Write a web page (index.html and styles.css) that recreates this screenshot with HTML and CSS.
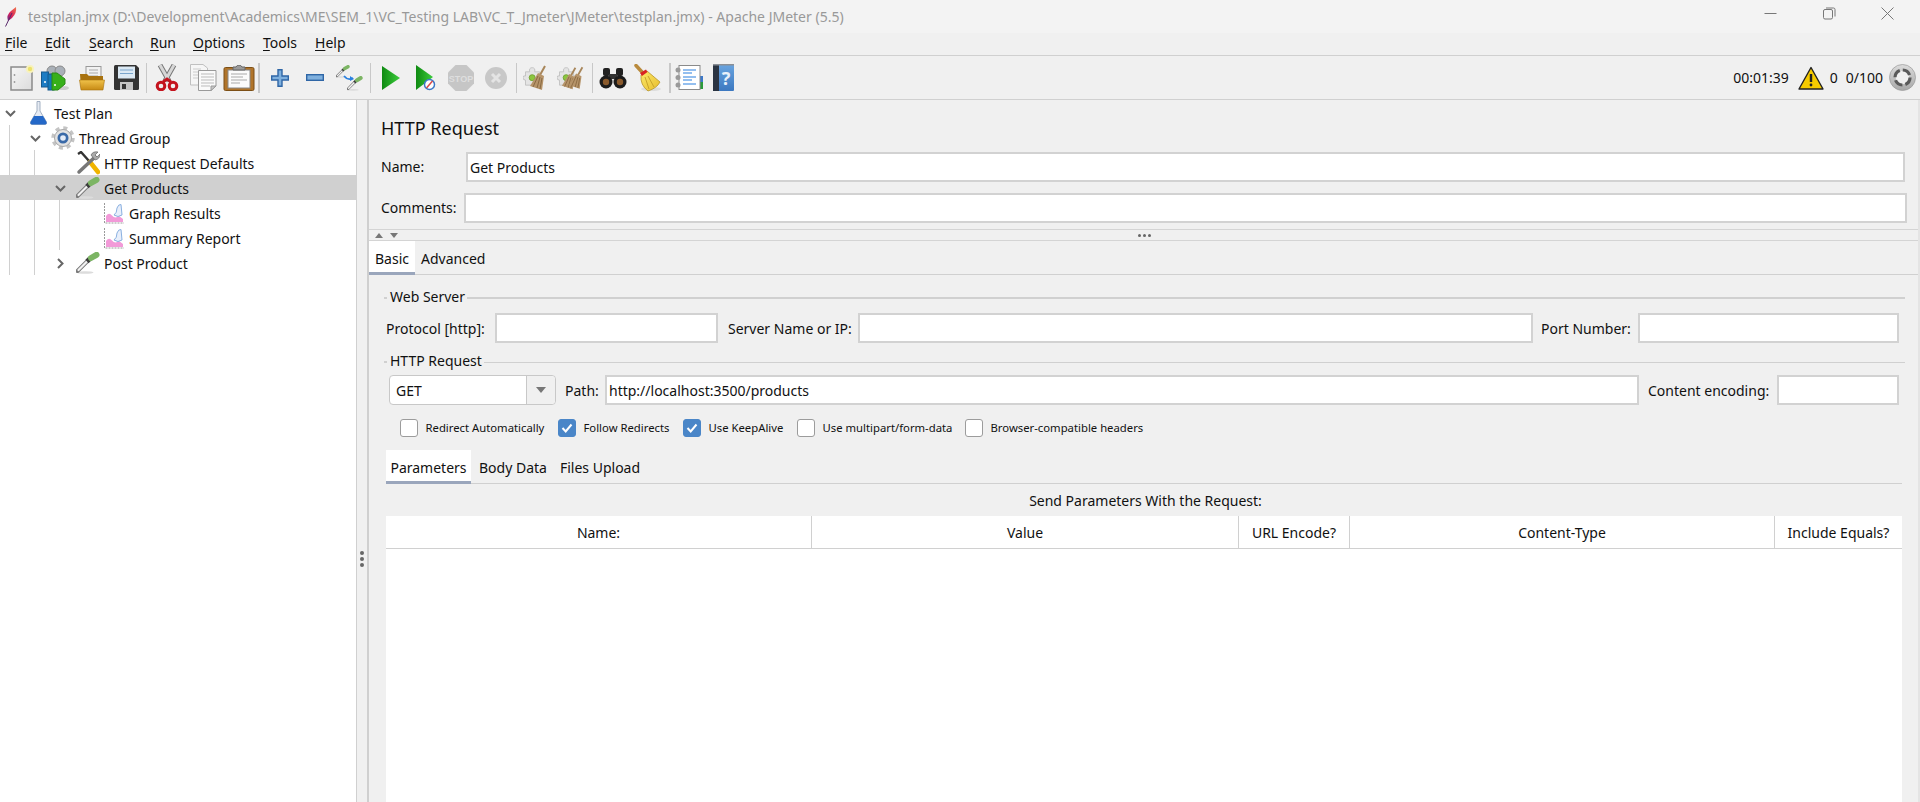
FILE: index.html
```html
<!DOCTYPE html>
<html lang="en">
<head>
<meta charset="utf-8">
<title>testplan.jmx - Apache JMeter (5.5)</title>
<link rel="stylesheet" href="styles.css">
</head>
<body>
<svg class="defs" aria-hidden="true">
  <defs>
    <linearGradient id="gPage" x1="0" y1="0" x2="1" y2="1"><stop offset="0" stop-color="#f6f6f6"/><stop offset="1" stop-color="#dcdcdc"/></linearGradient>
    <linearGradient id="gPlay" x1="0" y1="0" x2="1" y2="0"><stop offset="0" stop-color="#0f8a12"/><stop offset="1" stop-color="#3ccc3c"/></linearGradient>
    <linearGradient id="gFolder" x1="0" y1="0" x2="0" y2="1"><stop offset="0" stop-color="#f0c24a"/><stop offset="1" stop-color="#c78a14"/></linearGradient>
    <linearGradient id="gBook" x1="0" y1="0" x2="0" y2="1"><stop offset="0" stop-color="#6aa5e0"/><stop offset="1" stop-color="#3c78c0"/></linearGradient>
    <linearGradient id="gSpin" x1="0" y1="0" x2="0" y2="1"><stop offset="0" stop-color="#dcdcdc"/><stop offset="1" stop-color="#a8a8a8"/></linearGradient>
    <linearGradient id="gFeather" x1="1" y1="0" x2="0" y2="1"><stop offset="0" stop-color="#f0764a"/><stop offset=".6" stop-color="#d81e5a"/><stop offset="1" stop-color="#6a2a8a"/></linearGradient>
    <linearGradient id="gBroom" x1="0" y1="0" x2="1" y2="1"><stop offset="0" stop-color="#fbe96a"/><stop offset="1" stop-color="#e8bc2c"/></linearGradient>
    <symbol id="dropper" viewBox="0 0 24 22">
      <ellipse cx="9" cy="20.500" rx="8.500" ry="1.300" fill="#dcdcdc"/>
      <path d="M1.500 19 L11 9.500" stroke="#7a7a7a" stroke-width="4" stroke-linecap="round"/>
      <path d="M2.500 18 L11 9.500" stroke="#f2f2f2" stroke-width="2.200" stroke-linecap="round"/>
      <path d="M11 9.500 L14 6.500" stroke="#3c3c3c" stroke-width="4.600"/>
      <path d="M15 6 L20.500 2.800" stroke="#7cb564" stroke-width="6" stroke-linecap="round"/>
    </symbol>
    <symbol id="graph" viewBox="0 0 21 21">
      <path d="M1.500 0 V20 H21" fill="none" stroke="#9a9a9a" stroke-dasharray="2 1"/>
      <path d="M3 19 V13 Q6 9 9 12.500 Q12 16 16 13 L20 16 V19z" fill="#f29ad8"/>
      <path d="M11 12 Q14 10 14 5 Q15.500 1 18 1.500 L19 12 Q15 15 11 12z" fill="#e8effb" stroke="#8ab0e0"/>
    </symbol>
    <symbol id="broomBrown" viewBox="0 0 20 26">
      <path d="M16 1 L11 10" stroke="#a8865a" stroke-width="2"/>
      <path d="M9 8 L15 11 L13 25 L1 21z" fill="#b6946a"/>
      <path d="M9 11 L4 22 M11 12 L8 23 M13 13 L11 24" stroke="#8a6a42"/>
    </symbol>
    <symbol id="puzzle" viewBox="0 0 24 24">
      <path d="M3 7 H8 Q7 2 11 2 Q15 2 14 7 H20 V12 Q24 11 24 15 Q24 19 20 18 V23 H3 V17 Q0 17 0 14 Q0 11 3 12z" fill="#e4e4e4" stroke="#bdbdbd"/>
      <circle cx="11" cy="14" r="3.600" fill="#8cc63f" stroke="#6c9f2a"/>
    </symbol>
  </defs>
</svg>

<header class="titlebar">
  <svg class="feather" width="12" height="20" viewBox="0 0 12 20"><path d="M11 0 Q12 6 7 11 L3 14 Q1 8 6 4z" fill="url(#gFeather)"/><path d="M7 6 L0.500 19.500" stroke="#5a2a6a" stroke-width="1"/></svg>
  <span class="title">testplan.jmx (D:\Development\Academics\ME\SEM_1\VC_Testing LAB\VC_T_Jmeter\JMeter\testplan.jmx) - Apache JMeter (5.5)</span>
  <div class="winbtns">
    <span class="winbtn"><svg width="13" height="13" viewBox="0 0 13 13"><path d="M0.500 6.500H12.500" stroke="#777"/></svg></span>
    <span class="winbtn"><svg width="13" height="13" viewBox="0 0 13 13"><rect x="0.500" y="2.500" width="9" height="9.500" rx="1.500" fill="none" stroke="#777"/><path d="M3 1 H10.500 Q12 1 12 2.500 V9.500" fill="none" stroke="#777"/></svg></span>
    <span class="winbtn"><svg width="13" height="13" viewBox="0 0 13 13"><path d="M0.500 0.500L12.500 12.500M12.500 0.500L0.500 12.500" stroke="#777"/></svg></span>
  </div>
</header>

<nav class="menubar">
  <span class="menu m-file"><u>F</u>ile</span>
  <span class="menu m-edit"><u>E</u>dit</span>
  <span class="menu m-search"><u>S</u>earch</span>
  <span class="menu m-run"><u>R</u>un</span>
  <span class="menu m-options"><u>O</u>ptions</span>
  <span class="menu m-tools"><u>T</u>ools</span>
  <span class="menu"><u>H</u>elp</span>
</nav>

<div class="toolbar">
  <div class="group first">
    <span class="tb"><svg width="24" height="26" viewBox="0 0 24 26"><rect x="1" y="2" width="21" height="23" fill="url(#gPage)" stroke="#8a8a8a" stroke-width="1.500"/><circle cx="4.500" cy="10" r=".9" fill="#999"/><circle cx="4.500" cy="17" r=".9" fill="#999"/><circle cx="20" cy="4" r="4" fill="#f8f2bc"/><circle cx="20" cy="4" r="2.200" fill="#ece26c"/></svg></span>
    <span class="tb shift-l"><svg width="28" height="26" viewBox="0 0 28 26"><ellipse cx="22" cy="23" rx="6" ry="2" fill="#ccc"/><circle cx="11" cy="6" r="5" fill="#a9b0b8" stroke="#8a8a8a"/><circle cx="19" cy="6" r="5" fill="#a9b0b8" stroke="#8a8a8a"/><rect x="0.500" y="7" width="7" height="15" fill="#1c7cc4" stroke="#15598e"/><rect x="7" y="9" width="6" height="16" fill="#157ab8" stroke="#15598e"/><path d="M11 8 H16 L24 14 V19 L17 25 H11z" fill="#37b01a" stroke="#2a8a14"/><circle cx="4" cy="17" r="1" fill="#fff"/><circle cx="14" cy="20" r="1" fill="#fff"/></svg></span>
    <span class="tb"><svg width="26" height="26" viewBox="0 0 26 26"><rect x="7" y="1.500" width="15" height="14" fill="#f2f2f2" stroke="#999"/><path d="M10 5H19M10 8H19M10 11H19" stroke="#aaa"/><path d="M1 9 H8 L10 11 H24 V24 H2z" fill="#a8720f"/><path d="M0.500 15 H25.500 L24 25 H2z" fill="url(#gFolder)" stroke="#a8720f" stroke-width=".6"/></svg></span>
    <span class="tb"><svg width="25" height="25" viewBox="0 0 25 25"><path d="M0 1.500 Q0 0 1.500 0 H22 L25 3 V23.500 Q25 25 23.500 25 H1.500 Q0 25 0 23.500z" fill="#333"/><rect x="4" y="1.500" width="17" height="12" fill="#dbe9f4"/><path d="M6 5H19M6 8.500H19" stroke="#7aa5cc"/><rect x="6" y="17" width="13" height="8" fill="#c4c4c4"/><rect x="8" y="19" width="4" height="5" fill="#333"/></svg></span>
  </div>
  <i class="sep sep-a"></i>
  <div class="group wide">
    <span class="tb"><svg width="24" height="27" viewBox="0 0 24 27"><path d="M5 1 L14 17 M19 1 L10 17" stroke="#777" stroke-width="5"/><path d="M5 1 L14 17 M19 1 L10 17" stroke="#d6d6d6" stroke-width="3"/><circle cx="6" cy="22" r="3.800" fill="none" stroke="#c4141e" stroke-width="3"/><circle cx="18" cy="22" r="3.800" fill="none" stroke="#c4141e" stroke-width="3"/><path d="M8 18 L12 15 L16 18" fill="none" stroke="#c4141e" stroke-width="3"/></svg></span>
    <span class="tb"><svg width="27" height="27" viewBox="0 0 27 27"><path d="M0.500 0.500 H13 L17.500 4 V21 H0.500z" fill="#f6f6f6" stroke="#c0c0c0"/><path d="M3 5H11M3 8H11M3 11H8M3 14H8" stroke="#ccc"/><path d="M8.500 6.500 H26 V22 L21 26.500 H8.500z" fill="#fafafa" stroke="#9a9a9a"/><path d="M11 10H24M11 13H24M11 16H24M11 19H24M11 22H20" stroke="#bbb"/><path d="M21 26.500 V22 H26z" fill="#c8c8c8" stroke="#9a9a9a"/></svg></span>
    <span class="tb"><svg width="32" height="26" viewBox="0 0 32 26"><rect x="1" y="2.500" width="30" height="23" rx="1.500" fill="#b0742a" stroke="#7c4f16"/><rect x="5" y="5" width="22" height="18" fill="#fbfbfb" stroke="#888"/><path d="M8 9H24M8 12H20M8 15H24M8 18H17" stroke="#aaa" stroke-width="1.200"/><path d="M10 5 V2 H13 Q14 0 16 0 Q18 0 19 2 H22 V5z" fill="#9a9a9a" stroke="#666"/></svg></span>
  </div>
  <i class="sep sep-b"></i>
  <div class="group">
    <span class="tb"><svg width="18" height="18" viewBox="0 0 18 18"><path d="M7 .7h4v6.300h6.300v4H11v6.300H7V11H.7V7H7z" fill="#7fb0de" stroke="#2f66a6" stroke-width="1.400"/></svg></span>
    <span class="tb"><svg width="18" height="7" viewBox="0 0 18 7"><rect x=".7" y=".7" width="16.600" height="5.600" fill="#7fb0de" stroke="#2f66a6" stroke-width="1.400"/></svg></span>
    <span class="tb"><svg width="27" height="26" viewBox="0 0 27 26"><use href="#dropper" x="0" y="0" width="14" height="13"/><use href="#dropper" x="11" y="11" width="16" height="15"/><path d="M8 11 Q12 16 17 13" fill="none" stroke="#2a80e0" stroke-width="1.800"/><path d="M18 14 L14 11 L14 16z" fill="#2a80e0"/></svg></span>
  </div>
  <i class="sep sep-c"></i>
  <div class="group">
    <span class="tb"><svg width="18" height="24" viewBox="0 0 18 24"><path d="M0 0 L18 12 L0 24z" fill="url(#gPlay)"/></svg></span>
    <span class="tb"><svg width="20" height="26" viewBox="0 0 20 26"><path d="M0 0 L17 12 L0 25z" fill="url(#gPlay)"/><circle cx="13.500" cy="19.500" r="5" fill="#fff" stroke="#3c78c8" stroke-width="1.500"/><path d="M10.500 23 L16.500 16" stroke="#d84a4a" stroke-width="1.500"/></svg></span>
    <span class="tb"><svg width="28" height="28" viewBox="0 0 28 28"><path d="M8.500 1 H19.500 L27 8.500 V19.500 L19.500 27 H8.500 L1 19.500 V8.500z" fill="#c6c6c6"/><text class="stop" x="14" y="18" text-anchor="middle">STOP</text></svg></span>
    <span class="tb"><svg width="22" height="22" viewBox="0 0 22 22"><circle cx="11" cy="11" r="11" fill="#c8c8c8"/><path d="M7 7 L15 15 M15 7 L7 15" stroke="#e4e4e4" stroke-width="3"/></svg></span>
  </div>
  <i class="sep sep-d"></i>
  <div class="group">
    <span class="tb"><svg width="26" height="28" viewBox="0 0 26 28"><use href="#puzzle" x="0" y="2" width="20" height="20"/><use href="#broomBrown" x="6" y="1" width="20" height="26"/></svg></span>
    <span class="tb"><svg width="28" height="28" viewBox="0 0 28 28"><use href="#puzzle" x="0" y="2" width="20" height="20"/><use href="#broomBrown" x="4" y="2" width="18" height="25"/><use href="#broomBrown" x="11" y="1" width="18" height="26"/></svg></span>
  </div>
  <i class="sep sep-e"></i>
  <div class="group">
    <span class="tb"><svg width="28" height="22" viewBox="0 0 28 22"><rect x="4" y="1" width="7" height="8" rx="2" fill="#222"/><rect x="17" y="1" width="7" height="8" rx="2" fill="#222"/><rect x="10" y="7" width="8" height="5" fill="#333"/><circle cx="7" cy="15" r="6.500" fill="#1c1c1c"/><circle cx="21" cy="15" r="6.500" fill="#1c1c1c"/><circle cx="7" cy="15" r="3.200" fill="#8a5a2c"/><circle cx="21" cy="15" r="3.200" fill="#8a5a2c"/></svg></span>
    <span class="tb"><svg width="27" height="28" viewBox="0 0 27 28"><ellipse cx="17" cy="25" rx="10" ry="2" fill="#ddd"/><path d="M2 1.500 L8 8" stroke="#b98a3c" stroke-width="3.500" stroke-linecap="round"/><path d="M7 11 L13 7 L26 18 Q23 24 14 27 Q6 21 7 11z" fill="url(#gBroom)" stroke="#b8962a" stroke-width=".8"/><path d="M6 9 L12 5.500 L13.500 8 L8 12z" fill="#d92222"/><path d="M11 13 L15 25 M14 12 L20 23" stroke="#c8a42c"/></svg></span>
  </div>
  <i class="sep sep-f"></i>
  <div class="group">
    <span class="tb"><svg width="28" height="27" viewBox="0 0 28 27"><rect x="24" y="12" width="4" height="6" fill="#3c78c8"/><rect x="24" y="18" width="4" height="7" fill="#2a9a3a"/><rect x="4" y="1.500" width="21" height="24" fill="#fff" stroke="#8a8a8a"/><circle cx="3" cy="6" r="2.500" fill="#999"/><circle cx="3" cy="13.500" r="2.500" fill="#999"/><circle cx="3" cy="21" r="2.500" fill="#999"/><path d="M8 6H21M8 9H17M8 13H21M8 16H17M8 20H21" stroke="#2a80e0" stroke-width="1.200"/></svg></span>
    <span class="tb"><svg width="21" height="27" viewBox="0 0 21 27"><rect x="0" y="0" width="21" height="27" rx="1" fill="url(#gBook)"/><rect x="0" y="0" width="6" height="27" fill="#2a3442"/><rect x="0" y="0" width="21" height="1.500" fill="#8a8f96"/><text class="qmark" x="13" y="21" text-anchor="middle">?</text></svg></span>
  </div>
  <div class="status">
    <span class="time">00:01:39</span>
    <svg class="warn" width="26" height="24" viewBox="0 0 26 24"><path d="M13 1.500 L25 23 H1z" fill="#f6cb00" stroke="#222" stroke-width="1.400" stroke-linejoin="round"/><path d="M13 8 V16" stroke="#222" stroke-width="2.400"/><circle cx="13" cy="19" r="1.400" fill="#222"/></svg>
    <span class="count">0</span>
    <span class="threads">0/100</span>
    <svg class="spin" width="27" height="27" viewBox="0 0 27 27"><circle cx="13.500" cy="13.500" r="13" fill="url(#gSpin)" stroke="#999" stroke-width=".7"/><circle cx="13.500" cy="13.500" r="6.800" fill="#f0f0f0"/><circle cx="13.500" cy="13.500" r="7.500" fill="none" stroke="#5a5a5a" stroke-width="3.200" stroke-dasharray="8.800 3"/></svg>
  </div>
</div>

<main class="main">
  <aside class="tree">
    <div class="row">
      <span class="toggle"><svg width="11" height="7" viewBox="0 0 11 7"><path d="M1 1 L5.500 5.500 L10 1" fill="none" stroke="#666" stroke-width="2"/></svg></span>
      <span class="ticon"><svg width="19" height="24" viewBox="0 0 18 24"><path d="M7.500 .5 H10.500 V10 L17 21 Q17.500 23.500 15.500 23.500 H2.500 Q.5 23.500 1 21 L7.500 10z" fill="#e6ebf3" stroke="#9aa8bc" stroke-width=".9"/><path d="M4.500 15 H13.500 L17 21 Q17.500 23.500 15.500 23.500 H2.500 Q.5 23.500 1 21z" fill="#2468c8"/></svg></span>
      <span class="tlabel">Test Plan</span>
    </div>
    <div class="row">
      <i class="guide"></i>
      <span class="toggle"><svg width="11" height="7" viewBox="0 0 11 7"><path d="M1 1 L5.500 5.500 L10 1" fill="none" stroke="#666" stroke-width="2"/></svg></span>
      <span class="ticon"><svg width="24" height="24" viewBox="0 0 24 24"><circle cx="12" cy="12" r="10" fill="none" stroke="#c4c4c4" stroke-width="3.500" stroke-dasharray="4 3.850"/><circle cx="12" cy="12" r="8.500" fill="#e2e2e2" stroke="#a8a8a8"/><circle cx="12" cy="12" r="5.500" fill="#3a6aa8"/><circle cx="12" cy="12" r="2.800" fill="#e4ecf8"/></svg></span>
      <span class="tlabel">Thread Group</span>
    </div>
    <div class="row">
      <i class="guide"></i><i class="guide"></i>
      <span class="toggle"></span>
      <span class="ticon"><svg width="24" height="24" viewBox="0 0 24 24"><path d="M2 3 L5 1 L21 19" stroke="#333" stroke-width="2.400" fill="none"/><path d="M14 11 L22 21" stroke="#f0b400" stroke-width="4.500" stroke-linecap="round"/><path d="M19 6 L3 21" stroke="#777" stroke-width="3.500" stroke-linecap="round"/><path d="M15 4 Q17 0 22 1 L19 4 L21 6 L24 3 Q24 8 19 9z" fill="#aaa" stroke="#666" stroke-width=".7"/></svg></span>
      <span class="tlabel">HTTP Request Defaults</span>
    </div>
    <div class="row selected">
      <i class="guide"></i><i class="guide"></i>
      <span class="toggle"><svg width="11" height="7" viewBox="0 0 11 7"><path d="M1 1 L5.500 5.500 L10 1" fill="none" stroke="#666" stroke-width="2"/></svg></span>
      <span class="ticon"><svg width="24" height="22"><use href="#dropper" width="24" height="22"/></svg></span>
      <span class="tlabel">Get Products</span>
    </div>
    <div class="row">
      <i class="guide"></i><i class="guide"></i><i class="guide"></i>
      <span class="toggle"></span>
      <span class="ticon"><svg width="21" height="21"><use href="#graph" width="21" height="21"/></svg></span>
      <span class="tlabel">Graph Results</span>
    </div>
    <div class="row">
      <i class="guide"></i><i class="guide"></i><i class="guide"></i>
      <span class="toggle"></span>
      <span class="ticon"><svg width="21" height="21"><use href="#graph" width="21" height="21"/></svg></span>
      <span class="tlabel">Summary Report</span>
    </div>
    <div class="row">
      <i class="guide"></i><i class="guide"></i>
      <span class="toggle"><svg width="7" height="11" viewBox="0 0 7 11"><path d="M1 1 L5.500 5.500 L1 10" fill="none" stroke="#666" stroke-width="2"/></svg></span>
      <span class="ticon"><svg width="24" height="22"><use href="#dropper" width="24" height="22"/></svg></span>
      <span class="tlabel">Post Product</span>
    </div>
  </aside>

  <div class="splitter"><span class="dots"><i></i><i></i><i></i></span></div>

  <section class="panel">
    <h1 class="heading">HTTP Request</h1>
    <div class="namerow">
      <label class="namelabel">Name:</label>
      <input class="field" type="text" value="Get Products">
    </div>
    <div class="commentrow">
      <label class="commentlabel">Comments:</label>
      <input class="field" type="text">
    </div>
    <div class="vsplit">
      <span class="arrows"><i class="up"></i><i class="down"></i></span>
      <span class="hdots"><i></i><i></i><i></i></span>
    </div>
    <div class="tabs">
      <span class="tab active">Basic</span>
      <span class="tab">Advanced</span>
    </div>

    <div class="detail">
      <div class="legend first-legend"><i class="dash"></i><span>Web Server</span><i class="rule"></i></div>
      <div class="formrow row-server">
        <label class="l-protocol">Protocol [http]:</label>
        <input class="field w-protocol" type="text">
        <label class="l-server">Server Name or IP:</label>
        <input class="field grow" type="text">
        <label class="l-port">Port Number:</label>
        <input class="field w-port" type="text">
      </div>
      <div class="legend second-legend"><i class="dash"></i><span>HTTP Request</span><i class="rule thin"></i></div>
      <div class="formrow row-http">
        <div class="select"><span class="sel-val">GET</span><span class="sel-btn"><i></i></span></div>
        <label class="l-path">Path:</label>
        <input class="field grow" type="text" value="http://localhost:3500/products">
        <label class="l-enc">Content encoding:</label>
        <input class="field w-enc" type="text">
      </div>
      <div class="checks">
        <span class="check c1"><i class="box"></i>Redirect Automatically</span>
        <span class="check c2"><i class="box on"><svg width="18" height="18" viewBox="0 0 18 18"><path d="M4.500 9 L7.700 12.500 L13.500 5.500" fill="none" stroke="#fff" stroke-width="2"/></svg></i>Follow Redirects</span>
        <span class="check c3"><i class="box on"><svg width="18" height="18" viewBox="0 0 18 18"><path d="M4.500 9 L7.700 12.500 L13.500 5.500" fill="none" stroke="#fff" stroke-width="2"/></svg></i>Use KeepAlive</span>
        <span class="check c4"><i class="box"></i>Use multipart/form-data</span>
        <span class="check"><i class="box"></i>Browser-compatible headers</span>
      </div>
      <div class="tabs subtabs">
        <span class="tab active t-params">Parameters</span>
        <span class="tab t-body">Body Data</span>
        <span class="tab">Files Upload</span>
      </div>
      <div class="caption">Send Parameters With the Request:</div>
      <div class="table">
        <div class="thead">
          <span>Name:</span><span>Value</span><span>URL Encode?</span><span>Content-Type</span><span>Include Equals?</span>
        </div>
        <div class="tbody"></div>
      </div>
    </div>
  </section>
</main>
</body>
</html>
```

FILE: styles.css
```css
* { box-sizing: border-box; }
html, body { height: 100%; }
body {
  margin: 0;
  width: 1920px;
  height: 802px;
  overflow: hidden;
  display: flex;
  flex-direction: column;
  background: #f0f0f0;
  color: #111;
  font: 14px/20px "Noto Sans", "Open Sans", sans-serif;
}
.defs { display: block; width: 0; height: 0; flex: none; }
i { font-style: normal; }

/* title bar */
.titlebar {
  height: 33px;
  flex: none;
  display: flex;
  align-items: center;
  background: #f3f3f3;
}
.feather { margin-left: 5px; flex: none; }
.title { margin-left: 11px; font-size: 14px; color: #999; white-space: nowrap; }
.winbtns { margin-left: auto; display: flex; margin-right: 3px; margin-top: -6px; }
.winbtn { width: 58.500px; display: flex; justify-content: center; }

/* menu */
.menubar {
  height: 23px;
  flex: none;
  display: flex;
  align-items: center;
  padding: 0 0 2px 5px;
  border-bottom: 1px solid #d0d0d0;
  font-size: 14px;
}
.menu u { text-underline-offset: 2px; }
.m-file { width: 40px; }
.m-edit { width: 44px; }
.m-search { width: 61px; }
.m-run { width: 43px; }
.m-options { width: 70px; }
.m-tools { width: 52px; }

/* toolbar */
.toolbar {
  height: 44px;
  flex: none;
  display: flex;
  align-items: center;
  padding-left: 4px;
  border-bottom: 1px solid #d0d0d0;
}
.group { display: flex; align-items: center; }
.tb { width: 35px; display: flex; justify-content: center; align-items: center; }
.wide .tb { width: 36px; }
.shift-l { margin: 0 2px 0 -2px; }
.stop { font: bold 9px "Liberation Sans", sans-serif; fill: #dedede; }
.qmark { font: bold 18px "Noto Sans", sans-serif; fill: #e8f0fa; }
.sep { height: 30px; flex: none; width: 1px; background: #c8c8c8; }
.sep-a { margin: 0 2px; }
.sep-b { width: 2px; margin: 0 2px 0 1px; }
.sep-c { margin: 0 2px 0 3px; }
.sep-d { margin: 0 1px 0 3px; }
.sep-e { margin: 0 2px 0 4px; }
.sep-f { width: 2px; margin: 0 0 0 4px; }
.status { margin-left: auto; display: flex; align-items: center; padding-right: 4px; }
.warn { margin: 0 6px 0 9px; }
.count { width: 16px; }
.threads { margin-right: 6px; }

/* tree */
.main { flex: 1; min-height: 0; display: flex; }
.tree { width: 356px; flex: none; background: #fff; }
.row { height: 25px; display: flex; align-items: center; white-space: nowrap; }
.row.selected { background: #d0d0d0; }
.guide {
  width: 25px;
  height: 100%;
  flex: none;
  background: linear-gradient(#d0d0d0, #d0d0d0) 9px 0 / 1px 100% no-repeat;
}
.toggle { width: 20px; flex: none; display: flex; justify-content: center; align-items: center; padding-top: 2px; }
.ticon { width: 24px; margin-left: 6px; flex: none; display: flex; justify-content: center; align-items: center; padding-top: 1px; }
.tlabel { margin-left: 4px; padding-top: 2px; }

.splitter {
  width: 13px;
  flex: none;
  border-left: 1px solid #d0d0d0;
  border-right: 2px solid #cfcfcf;
  display: flex;
  align-items: center;
  justify-content: center;
  padding-top: 216px;
}
.dots { display: flex; flex-direction: column; gap: 2px; }
.dots i, .hdots i { width: 4px; height: 4px; border-radius: 50%; background: #666; display: block; }

/* right panel */
.panel {
  flex: 1;
  min-width: 0;
  display: flex;
  flex-direction: column;
  border-right: 2px solid #e4e4e4;
}
.heading { margin: 12px 0 8px 12px; font-weight: 400; font-size: 18px; line-height: 32px; }
.field {
  display: block;
  height: 30px;
  min-width: 0;
  border: 2px solid #d2d2d2;
  background: #fff;
  padding: 1px 2px 0 2px;
  font: 14px "Noto Sans", "Open Sans", sans-serif;
  color: #111;
  outline: 0;
  border-radius: 0;
}
.grow { flex: 1; }
.namerow, .commentrow { display: flex; align-items: center; padding-left: 12px; }
.namerow { padding-right: 13px; }
.namerow .field { flex: 1; }
.namelabel { width: 85px; }
.commentrow { margin-top: 11px; padding-right: 11px; }
.commentrow .field { flex: 1; }
.commentlabel { width: 83px; }
.vsplit {
  margin-top: 6px;
  height: 12px;
  flex: none;
  border-top: 1px solid #d4d4d4;
  border-bottom: 1px solid #d4d4d4;
  display: flex;
  align-items: center;
}
.arrows { display: flex; gap: 7px; margin-left: 6px; }
.arrows i { width: 0; height: 0; border-left: 4px solid transparent; border-right: 4px solid transparent; }
.arrows .up { border-bottom: 5px solid #777; }
.arrows .down { border-top: 5px solid #777; }
.hdots { display: flex; gap: 2px; margin-left: 740px; }
.hdots i { width: 3px; height: 3px; }

.tabs { display: flex; height: 34px; flex: none; border-bottom: 1px solid #d0d0d0; }
.tab { padding: 2px 6px 0; display: flex; align-items: center; height: 33px; }
.tab.active { background: #fff; border-bottom: 3px solid #9aa6bc; height: 34px; margin-bottom: -1px; padding-top: 4px; }

.detail { flex: 1; min-height: 0; display: flex; flex-direction: column; padding: 0 13px 0 15px; }
.legend { display: flex; align-items: center; height: 18px; flex: none; }
.legend span { margin: 0 2px 0 3px; }
.dash { width: 3px; height: 2px; background: #d0d0d0; margin-top: 2px; }
.rule { flex: 1; height: 2px; background: #d0d0d0; margin-top: 2px; }
.rule.thin { height: 1px; }
.first-legend { margin-top: 13px; }
.second-legend { margin-top: 9px; }
.formrow { display: flex; align-items: center; height: 30px; flex: none; margin-right: 6px; }
.formrow label { padding-top: 2px; flex: none; }
.row-server { margin-top: 7px; margin-left: 1px; }
.row-http { margin-top: 5px; margin-left: 5px; }
.l-protocol { width: 110px; padding-left: 1px; }
.w-protocol { width: 223px; flex: none; }
.l-server { margin-left: 10px; width: 130px; }
.l-port { margin-left: 8px; width: 97px; }
.w-port { width: 261px; flex: none; }
.select {
  width: 167px;
  height: 30px;
  flex: none;
  display: flex;
  background: #fff;
  border: 1px solid #c8c8c8;
  border-radius: 4px;
}
.sel-val { flex: 1; display: flex; align-items: center; padding: 2px 0 0 6px; }
.sel-btn {
  width: 29px;
  border-left: 1px solid #c8c8c8;
  background: #f0f0f0;
  border-radius: 0 4px 4px 0;
  display: flex;
  align-items: center;
  justify-content: center;
}
.sel-btn i { width: 0; height: 0; border-left: 5px solid transparent; border-right: 5px solid transparent; border-top: 6px solid #777; }
.l-path { margin-left: 9px; width: 40px; }
.l-enc { margin-left: 9px; width: 129px; }
.w-enc { width: 122px; flex: none; }

.checks { display: flex; align-items: center; height: 18px; margin: 14px 0 0 16px; flex: none; font-size: 11.300px; }
.check { display: flex; align-items: center; white-space: nowrap; }
.box {
  width: 18px;
  height: 18px;
  flex: none;
  margin-right: 7.500px;
  border: 1.500px solid #9c9c9c;
  border-radius: 3px;
  background: #fff;
}
.box svg { display: block; margin: -1.500px; }
.box.on { background: #4a86c8; border-color: #4a86c8; }
.c1 { width: 158px; }
.c2 { width: 125px; }
.c3 { width: 114px; }
.c4 { width: 168px; }

.subtabs { margin: 13px 3px 0 2px; }
.subtabs .t-params { width: 85px; padding-left: 0; padding-right: 0; justify-content: center; }
.subtabs .t-body { padding-left: 8px; padding-right: 7px; }
.caption { height: 32px; flex: none; display: flex; align-items: center; justify-content: center; margin-left: 2px; padding-top: 2px; }
.table { flex: 1; min-height: 0; display: flex; flex-direction: column; background: #fff; margin: 0 3px 0 2px; }
.thead {
  height: 33px;
  flex: none;
  display: grid;
  grid-template-columns: 426px 427px 111px 425px 1fr;
  border-bottom: 1px solid #d0d0d0;
}
.thead span { display: flex; align-items: center; justify-content: center; border-right: 1px solid #d0d0d0; padding-top: 2px; }
.thead span:last-child { border-right: 0; }
.tbody { flex: 1; }
```
